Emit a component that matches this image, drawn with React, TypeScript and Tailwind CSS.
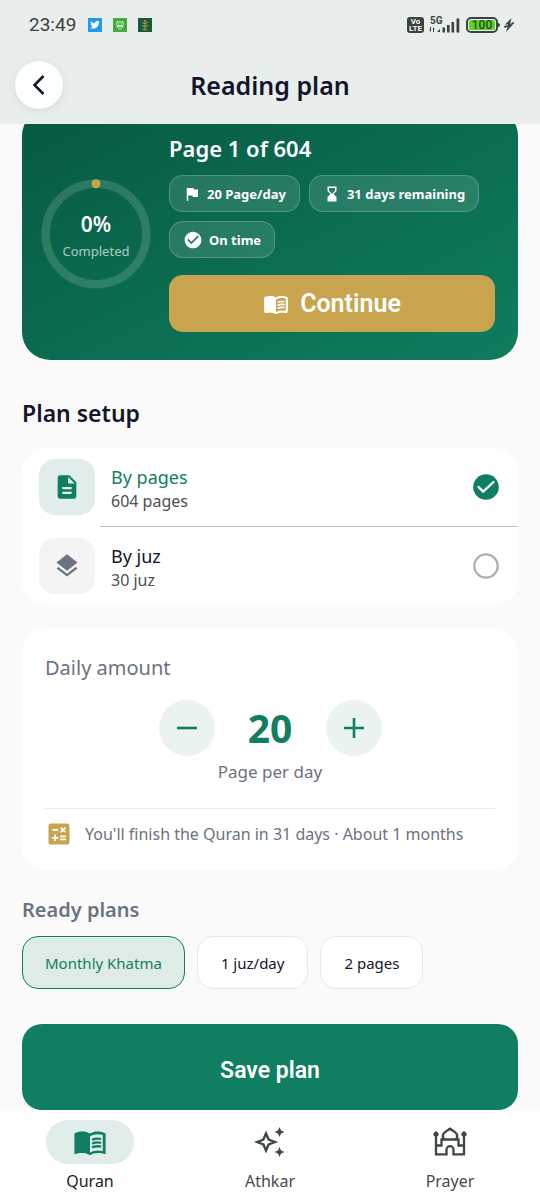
import { useState } from "react";
import type { ReactNode } from "react";
import {
  MdCalculate,
  MdCheckCircle,
  MdDescription,
  MdFlag,
  MdHourglassBottom,
  MdLayers,
} from "react-icons/md";

function TwitterBadge() {
  return (
    <svg viewBox="0 0 14 14" className="size-3.5" aria-hidden="true">
      <rect width="14" height="14" fill="#1d9bf0" />
      <path
        transform="translate(2.2 2) scale(.4)"
        fill="#fff"
        d="M24 4.6a10 10 0 0 1-2.8.8 5 5 0 0 0 2.1-2.7 10 10 0 0 1-3.1 1.2 4.900 4.900 0 0 0-8.400 4.500A14 14 0 0 1 1.700 3.100a4.900 4.900 0 0 0 1.500 6.600 5 5 0 0 1-2.200-.6c0 2.300 1.600 4.400 3.900 4.900a5 5 0 0 1-2.200.1 4.900 4.900 0 0 0 4.600 3.400A9.900 9.900 0 0 1 0 19.500 14 14 0 0 0 7.500 21.700c9.100 0 14-7.500 14-14v-.6A10 10 0 0 0 24 4.600z"
      />
    </svg>
  );
}

function RobotBadge() {
  return (
    <svg viewBox="0 0 14 14" className="size-3.5" aria-hidden="true">
      <rect width="14" height="14" fill="#45a93c" />
      <g fill="none" stroke="#c9f2c0" strokeWidth="1">
        <rect x="3.500" y="4" width="7" height="3.600" rx="1.600" />
        <path d="M4 8.500c.3 3.400 5.700 3.400 6 0zM4 3l1 1M10 3 9 4" />
      </g>
      <circle cx="5.500" cy="5.800" r=".6" fill="#fff" />
      <circle cx="8.500" cy="5.800" r=".6" fill="#fff" />
    </svg>
  );
}

function QuranBadge() {
  return (
    <svg viewBox="0 0 14 14" className="size-3.5" aria-hidden="true">
      <rect width="14" height="14" fill="#145c3b" />
      <path
        d="M7 2v10M4.500 4.500 7 6l2.500-2M4 7.500 7 9l3-2M5 11l2 1 2-1M6 2.500l2 1"
        fill="none"
        stroke="#a58b35"
        strokeWidth="1.200"
      />
    </svg>
  );
}

function SignalBars() {
  return (
    <svg viewBox="0 0 31 18" className="h-[18px] w-[31px]" role="img" aria-label="5G signal">
      <text x="1" y="8" fontFamily="Roboto, sans-serif" fontSize="10" fontWeight="700" fill="#3c4240">
        5G
      </text>
      <g fill="#3c4240">
        <path d="M2 11v5L0 13.800h1V11zM4 16v-5l2 2.200H5V16zM8 16l3-3v3z" />
        <rect x="13.500" y="11.500" width="2.500" height="5" />
        <rect x="18" y="9" width="2.600" height="7.500" />
        <rect x="22.500" y="6" width="2.600" height="10.500" />
        <rect x="27.500" y="2.500" width="2.800" height="14" />
      </g>
    </svg>
  );
}

function StatusBar() {
  return (
    <div className="flex h-[46px] items-center justify-between pr-[26px] pl-[29px] pt-1 text-[#3c4240]">
      <div className="flex items-center">
        <span className="font-[Roboto,sans-serif] text-[19px] leading-6">23:49</span>
        <div className="ml-3 flex gap-[11px]">
          <TwitterBadge />
          <RobotBadge />
          <QuranBadge />
        </div>
      </div>
      <div className="flex items-center font-[Roboto,sans-serif] font-bold">
        <div className="flex h-4 w-[17px] flex-col items-center justify-center rounded-[3px] bg-[#3c4240] text-[8px] leading-[7px] text-white">
          <span>Vo</span>
          <span>LTE</span>
        </div>
        <div className="ml-[5px]">
          <SignalBars />
        </div>
        <div className="ml-1.5 flex h-4 w-8 items-center justify-center rounded-[5px] border-2 border-[#3c4240] p-px">
          <span className="flex h-full w-full items-center justify-center rounded-[2px] bg-[#62cf2c] text-[12px] leading-none font-medium text-[#20511a]">
            100
          </span>
        </div>
        <div className="h-1 w-[2px] rounded-r-sm bg-[#3c4240]" />
        <svg viewBox="0 0 10 16" className="ml-1 h-4 w-2.5" aria-hidden="true">
          <path d="M7.500 1 1 7.500h3.200L2 15l7-7.500H5.800z" fill="#3c4240" />
          <path d="M0 9.500 4.500 8.500M5.500 7.500 10 6.500M.5 10.500l4-2M5.500 8 9.500 5.500" stroke="#3c4240" strokeWidth="1.200" />
        </svg>
      </div>
    </div>
  );
}

function Header() {
  return (
    <header className="sticky top-0 z-10 bg-[#e8eeec]">
      <StatusBar />
      <div className="grid h-[78px] grid-cols-[48px_1fr_48px] items-center px-[15px]">
        <button
          type="button"
          aria-label="Back"
          className="flex size-12 items-center justify-center rounded-full bg-[#fdfefe] shadow-[0_2px_10px_rgba(0,0,0,0.08)]"
        >
          <svg viewBox="0 0 24 24" className="size-6" aria-hidden="true">
            <path d="M16.500 3 7.500 12l9 9" fill="none" stroke="#14142b" strokeWidth="2.500" />
          </svg>
        </button>
        <h1 className="text-center text-[25px] leading-8 font-semibold">Reading plan</h1>
      </div>
    </header>
  );
}

function RoundedBookIcon() {
  return (
    <svg viewBox="0 0 24 24" className="size-[26px]" aria-hidden="true">
      <path
        fill="currentColor"
        d="M17.500 4.500c-1.950 0-4.050.4-5.500 1.500-1.450-1.100-3.550-1.500-5.500-1.500-1.450 0-2.990.22-4.280.79C1.490 5.620 1 6.330 1 7.140v11.280c0 1.300 1.220 2.260 2.480 1.940.98-.25 2.020-.36 3.020-.36 1.560 0 3.220.26 4.560.92.6.3 1.280.3 1.870 0 1.340-.67 3-.92 4.560-.92 1 0 2.040.11 3.020.36 1.260.33 2.480-.63 2.480-1.940V7.140c0-.81-.49-1.520-1.220-1.850-1.280-.57-2.820-.79-4.270-.79zM21 17.230c0 .63-.58 1.090-1.200.98-.75-.14-1.530-.2-2.300-.2-1.700 0-4.150.65-5.500 1.500V8c1.350-.85 3.800-1.500 5.500-1.500.92 0 1.830.09 2.700.28.46.1.8.51.8.98z"
      />
      <path
        d="M14 10.400c1.600-.7 3.500-.9 5.300-.5M14 13.100c1.600-.7 3.500-.9 5.300-.5M14 15.800c1.600-.7 3.500-.9 5.300-.5"
        fill="none"
        stroke="currentColor"
        strokeWidth="1.500"
        strokeLinecap="round"
      />
    </svg>
  );
}

function BookIcon() {
  return (
    <svg viewBox="0 0 24 24" className="size-[34px]" aria-hidden="true">
      <path
        fill="currentColor"
        d="M17.500 4.500c-1.950 0-4.050.4-5.500 1.500-1.450-1.100-3.550-1.500-5.500-1.500S2.450 4.900 1 6v14.700c1.600-.5 3.600-.9 5.500-.9 1.950 0 4.050.4 5.500 1.500 1.350-.85 3.800-1.500 5.500-1.500 1.800 0 3.800.3 5.500.9V6c-1.450-1.100-3.550-1.500-5.500-1.500zm3.500 14c-1.100-.35-2.300-.5-3.500-.5-1.700 0-4.150.65-5.500 1.500V8c1.350-.85 3.800-1.500 5.500-1.500 1.200 0 2.400.15 3.500.5z"
      />
      <path
        d="M13.500 10.500c1.900-.9 4.300-1.100 6.300-.6M13.500 13.200c1.900-.9 4.300-1.100 6.300-.6M13.500 15.900c1.900-.9 4.300-1.100 6.300-.6"
        fill="none"
        stroke="currentColor"
        strokeWidth="1.600"
      />
    </svg>
  );
}

function Chip({ icon, children }: { icon: ReactNode; children: ReactNode }) {
  return (
    <li className="flex h-[37px] items-center rounded-[14px] border border-white/20 bg-white/12 px-[13px] text-[13px] leading-5 font-bold">
      {icon}
      {children}
    </li>
  );
}

function ProgressRing() {
  return (
    <div className="grid size-[110px] shrink-0 place-items-center">
      <svg viewBox="0 0 110 110" className="col-start-1 row-start-1 size-full" aria-hidden="true">
        <circle cx="55" cy="55" r="50.300" fill="none" stroke="#fff" strokeOpacity=".15" strokeWidth="8.500" />
        <circle cx="55" cy="4.700" r="4.500" fill="#c8a44e" />
      </svg>
      <div className="col-start-1 row-start-1 flex flex-col items-center pt-1.5">
        <span className="text-[21px] leading-7 font-semibold">0%</span>
        <span className="text-[13px] leading-[26px] text-white/65">Completed</span>
      </div>
    </div>
  );
}

function ProgressCard() {
  return (
    <section className="-mt-4 flex items-center gap-[18px] rounded-[28px] bg-linear-to-br from-[#075a42] to-[#0f7d5f] py-7 pr-[23px] pl-[19px] text-white">
      <ProgressRing />
      <div className="min-w-0 flex-1">
        <h2 className="text-[22px] leading-6 font-semibold">Page 1 of 604</h2>
        <ul className="mt-[15px] flex flex-wrap gap-[9px]">
          <Chip icon={<MdFlag className="mr-1.5 size-[18px]" />}>20 Page/day</Chip>
          <Chip icon={<MdHourglassBottom className="mr-1.5 size-[18px]" />}>31 days remaining</Chip>
          <Chip icon={<MdCheckCircle className="mr-1.5 size-5" />}>On time</Chip>
        </ul>
        <button
          type="button"
          className="mt-[17px] flex h-[57px] w-full items-center justify-center gap-[11px] rounded-[14px] bg-[#c8a44e] font-[Roboto,sans-serif] text-[25px] leading-8 font-semibold"
        >
          <RoundedBookIcon />
          Continue
        </button>
      </div>
    </section>
  );
}

type Mode = "pages" | "juz";

function PlanOption({
  title,
  detail,
  icon,
  value,
  checked,
  onSelect,
}: {
  title: string;
  detail: string;
  icon: ReactNode;
  value: Mode;
  checked: boolean;
  onSelect: (mode: Mode) => void;
}) {
  return (
    <label className="flex h-[78px] cursor-pointer items-center pr-4 pl-[17px]">
      <input
        type="radio"
        name="plan-mode"
        value={value}
        checked={checked}
        onChange={() => onSelect(value)}
        className="sr-only"
      />
      <span
        className={
          checked
            ? "flex size-14 items-center justify-center rounded-2xl bg-[#e1edea] text-[#107e60]"
            : "flex size-14 items-center justify-center rounded-2xl bg-[#f4f4f4] text-[#6b7280]"
        }
      >
        {icon}
      </span>
      <span className="ml-4 flex flex-1 flex-col pt-1">
        <span className={checked ? "text-[18px] leading-6 text-[#107e60]" : "text-[18px] leading-6"}>{title}</span>
        <span className="text-[16px] leading-6 text-[#4b4f50]">{detail}</span>
      </span>
      {checked ? (
        <svg viewBox="0 0 32 32" className="size-8" aria-hidden="true">
          <circle cx="16" cy="16" r="12.800" fill="#107e60" />
          <path
            d="m8.500 16 4.700 4.700L23.500 11"
            fill="none"
            stroke="#fff"
            strokeWidth="2.400"
            strokeLinecap="round"
            strokeLinejoin="round"
          />
        </svg>
      ) : (
        <svg viewBox="0 0 32 32" className="size-8" aria-hidden="true">
          <circle cx="16" cy="16" r="11.700" fill="none" stroke="#a9aeb6" strokeWidth="2.200" />
        </svg>
      )}
    </label>
  );
}

function DailyAmount({ amount, onChange }: { amount: number; onChange: (amount: number) => void }) {
  const days = Math.ceil(604 / amount);
  const months = Math.max(1, Math.round(days / 30));
  const stepClass = "flex size-14 items-center justify-center rounded-full bg-[#ebf3f1] text-[#107e60]";
  return (
    <section className="mt-[23px] rounded-[24px] bg-white px-[23px] pt-6 pb-[22px]">
      <h2 className="text-[20px] leading-8 text-[#6b7280]">Daily amount</h2>
      <div className="mt-4 flex items-center justify-center">
        <button type="button" aria-label="Decrease" className={stepClass} onClick={() => onChange(Math.max(1, amount - 1))}>
          <svg viewBox="0 0 20 20" className="size-5" aria-hidden="true">
            <path d="M0 10h20" stroke="currentColor" strokeWidth="2.600" />
          </svg>
        </button>
        <output className="w-[111px] text-center text-[39px] leading-[56px] font-bold text-[#107e60]">{amount}</output>
        <button type="button" aria-label="Increase" className={stepClass} onClick={() => onChange(amount + 1)}>
          <svg viewBox="0 0 20 20" className="size-5" aria-hidden="true">
            <path d="M0 10h20M10 0v20" stroke="currentColor" strokeWidth="2.600" />
          </svg>
        </button>
      </div>
      <p className="mt-1 text-center text-[17px] leading-6 text-[#6b7280]">Page per day</p>
      <div className="mt-6 flex items-center border-t border-[#ebecee] pt-[11px]">
        <MdCalculate className="size-7 text-[#c8a44e]" />
        <p className="ml-3 text-[16px] leading-7 text-[#6b7280]">
          You'll finish the Quran in {days} days · About {months} months
        </p>
      </div>
    </section>
  );
}

const presets = ["Monthly Khatma", "1 juz/day", "2 pages"];

function SparklesIcon() {
  return (
    <svg viewBox="0 0 32 32" className="size-8" aria-hidden="true">
      <path
        d="m12 7.500 2.600 6L21 16l-6.400 2.500-2.600 6-2.600-6L3 16l6.400-2.500z"
        fill="none"
        stroke="#3f4643"
        strokeWidth="2.400"
      />
      <path
        fill="#3f4643"
        d="m25.500 1 1.500 3.500L30.500 6 27 7.500 25.500 11 24 7.500 20.500 6 24 4.500zM25.500 21l1.500 3.500 3.500 1.500-3.500 1.500-1.500 3.500-1.500-3.500-3.500-1.500 3.500-1.500z"
      />
    </svg>
  );
}

function MosqueIcon() {
  return (
    <svg viewBox="0 0 34 30" className="h-[30px] w-[34px]" aria-hidden="true">
      <g fill="none" stroke="#3f4643" strokeWidth="2.300">
        <path d="M3 8v19.300h10.500V23a3.500 3.800 0 0 1 7 0v4.300H31V8" />
        <path d="M3 18.500h5.500v-6h17v6H31" />
        <path d="M11 12.500C8 8 10.500 5.500 17 2c6.500 3.500 9 6 6 10.500" />
      </g>
      <g fill="#3f4643">
        <path d="M3 4c2 1.300 2.700 2.500 2.700 3.600 0 1.200-1 2-2.700 2s-2.700-.8-2.700-2C.3 6.500 1 5.300 3 4zM31 4c2 1.300 2.700 2.500 2.700 3.600 0 1.200-1 2-2.700 2s-2.700-.8-2.700-2c0-1.100.7-2.300 2.700-3.600zM17 .3l3.500 2.500h-7z" />
      </g>
    </svg>
  );
}

function NavItem({ label, icon, active = false }: { label: string; icon: ReactNode; active?: boolean }) {
  return (
    <a
      href="#"
      aria-current={active ? "page" : undefined}
      className="flex flex-1 flex-col items-center pt-[9px] pb-[7px]"
    >
      <span
        className={
          active
            ? "flex h-11 w-[88px] items-center justify-center rounded-full bg-[#e1edea] text-[#107e60]"
            : "flex h-11 w-[88px] items-center justify-center"
        }
      >
        {icon}
      </span>
      <span
        className={
          active ? "mt-[5px] text-[16px] leading-6 text-[#1b1d1c]" : "mt-[5px] text-[16px] leading-6 text-[#464b49]"
        }
      >
        {label}
      </span>
    </a>
  );
}

export default function App() {
  const [mode, setMode] = useState<Mode>("pages");
  const [amount, setAmount] = useState(20);
  const [preset, setPreset] = useState(presets[0]);

  return (
    <div className="flex min-h-screen flex-col bg-[#fafafa] font-['Noto_Sans',sans-serif] text-[#14142b]">
      <Header />
      <main className="flex-1 px-[22px]">
        <ProgressCard />

        <h2 className="mt-[37px] text-[23px] leading-8 font-semibold">Plan setup</h2>
        <section className="mt-[19px] rounded-[24px] bg-white">
          <PlanOption
            title="By pages"
            detail="604 pages"
            value="pages"
            checked={mode === "pages"}
            onSelect={setMode}
            icon={<MdDescription className="size-7" />}
          />
          <hr className="ml-[78px] border-[#bfc4c2]" />
          <PlanOption
            title="By juz"
            detail="30 juz"
            value="juz"
            checked={mode === "juz"}
            onSelect={setMode}
            icon={<MdLayers className="size-7" />}
          />
        </section>

        <DailyAmount amount={amount} onChange={setAmount} />

        <h2 className="mt-6 text-[20px] leading-8 font-semibold text-[#6b7280]">Ready plans</h2>
        <div className="mt-[10px] flex flex-wrap gap-3">
          {presets.map((name) => (
            <button
              key={name}
              type="button"
              aria-pressed={preset === name}
              onClick={() => setPreset(name)}
              className={
                preset === name
                  ? "h-[53px] rounded-2xl border border-[#107e60] bg-[#dfebe7] px-[22px] text-[15px] leading-6 text-[#107e60]"
                  : "h-[53px] rounded-2xl border border-[#e8e9eb] bg-white px-[23px] text-[15px] leading-6"
              }
            >
              {name}
            </button>
          ))}
        </div>

        <button
          type="button"
          className="mt-[35px] h-[86px] w-full rounded-[20px] bg-[#107e60] pt-2 font-[Roboto,sans-serif] text-[23px] leading-8 font-semibold text-white"
        >
          Save plan
        </button>
      </main>
      <nav className="flex bg-white">
        <NavItem label="Quran" active icon={<BookIcon />} />
        <NavItem label="Athkar" icon={<SparklesIcon />} />
        <NavItem label="Prayer" icon={<MosqueIcon />} />
      </nav>
    </div>
  );
}
